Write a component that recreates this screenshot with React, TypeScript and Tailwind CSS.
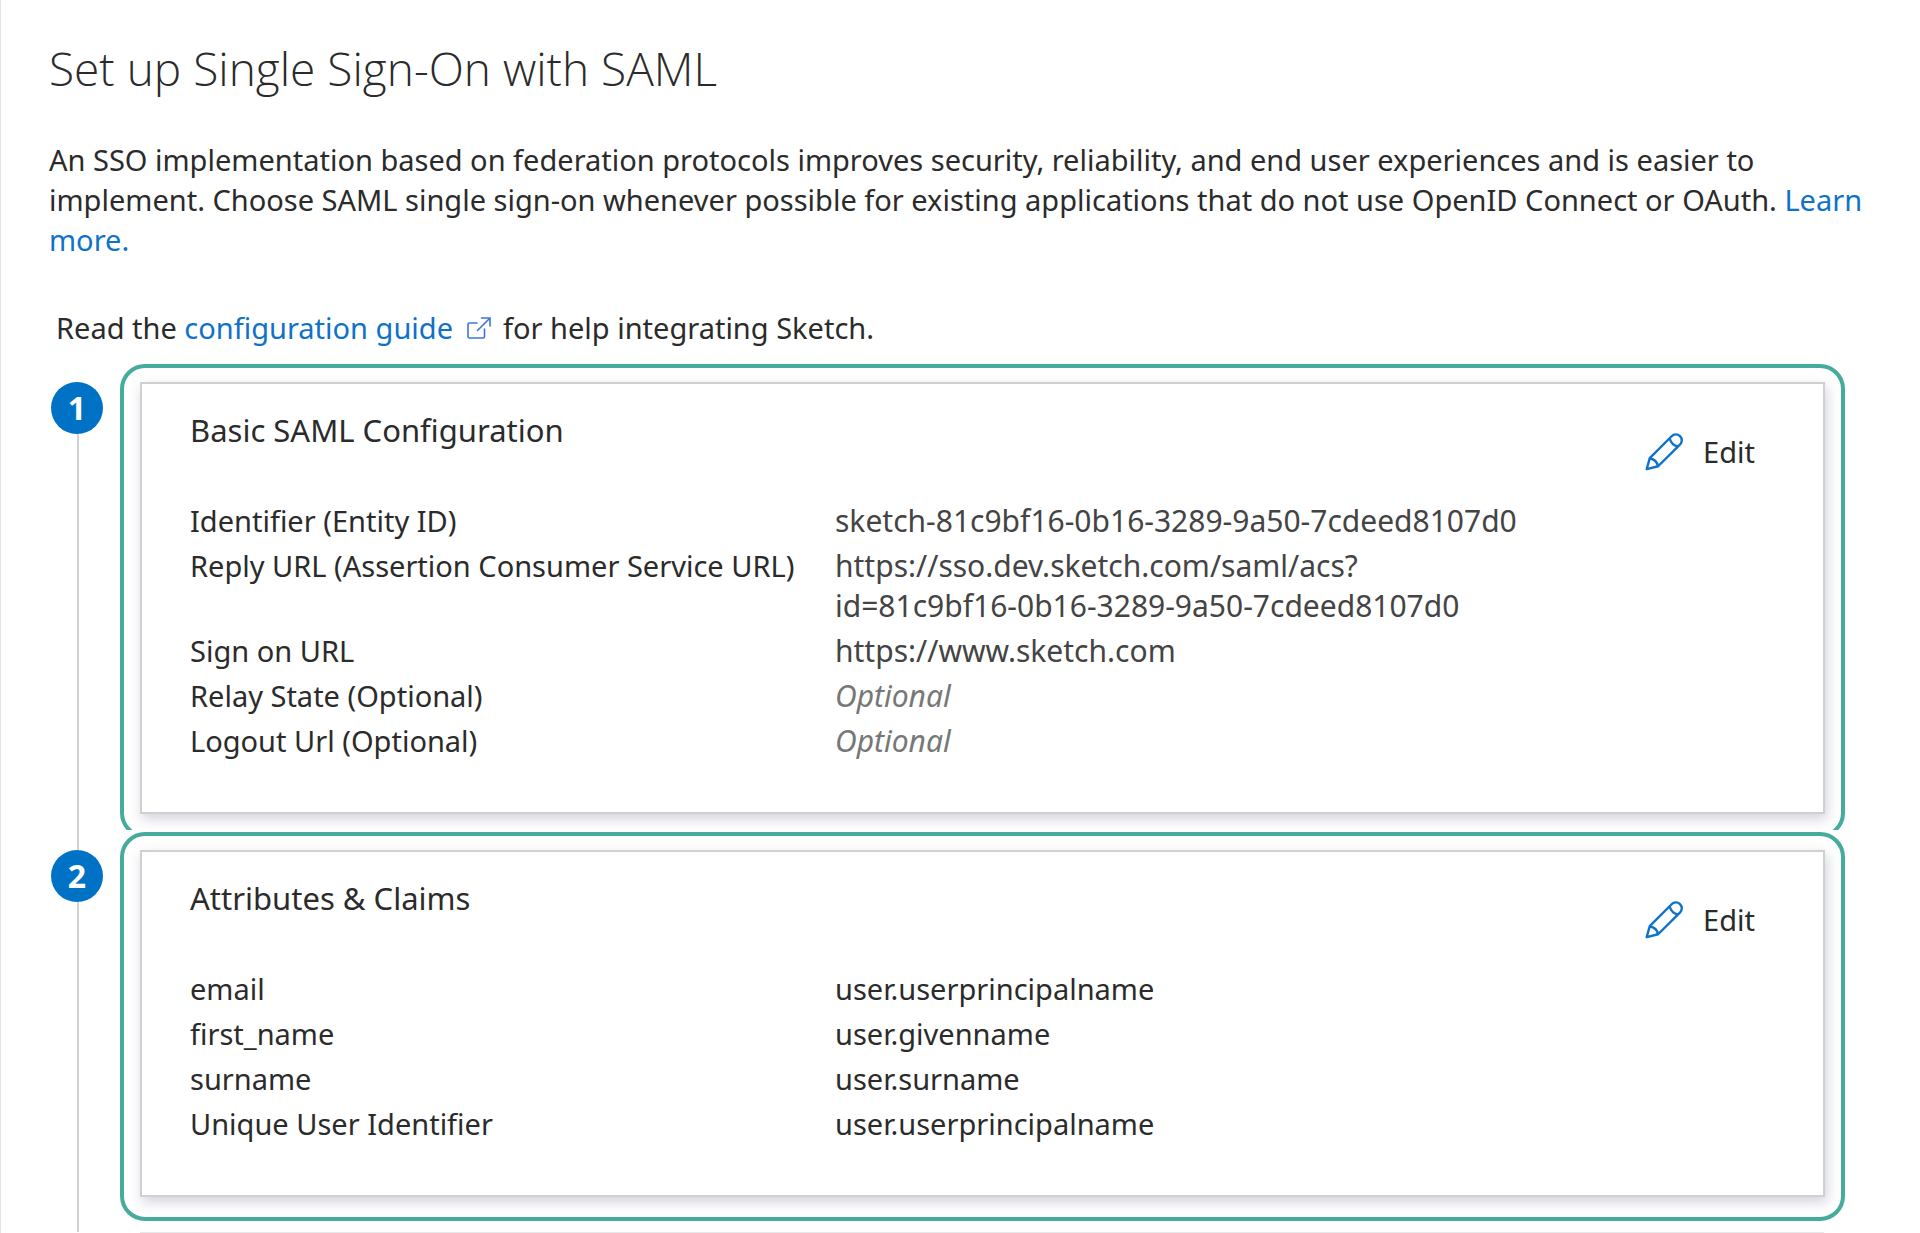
import React from 'react';

interface Field {
  label: string;
  value: string;
  kind?: 'link' | 'optional';
}

interface StepProps {
  step: number;
  title: string;
  fields: Field[];
  first?: boolean;
}

const PencilIcon = () => (
  <svg
    className="size-[38px] shrink-0"
    viewBox="0 0 40 40"
    fill="none"
    stroke="#0f72c9"
    strokeWidth="2.5"
    strokeLinejoin="round"
    aria-hidden="true"
  >
    <path d="M1.8 38 L5 26.5 L28 3.4 A6 6 0 0 1 37 12 L13.8 35 Z" />
    <path d="M26 5.8 Q27.8 12.6 34.6 14.2" />
    <path d="M5.2 26.8 Q12.4 28 13.6 34.8" />
  </svg>
);

const ExternalIcon = () => (
  <svg
    className="mr-3 ml-[14px] inline-block h-[22px] w-6 align-baseline"
    viewBox="0 0 24 22"
    fill="none"
    stroke="#3f74dc"
    strokeWidth="1.6"
    strokeLinecap="round"
    aria-hidden="true"
  >
    <path d="M10 6 H2.5 Q1 6 1 7.5 V19.5 Q1 21 2.5 21 H16 Q17.5 21 17.5 19.5 V12" />
    <path d="M10.5 13.5 L23 1 M14.5 1 H23 V9" />
  </svg>
);

const Step = ({ step, title, fields, first }: StepProps) => {
  const values = {
    link: 'text-[30px] text-[#444]',
    optional: 'text-[30px] text-[#777] italic',
  };

  return (
    <li className="flex pr-[75px] pl-[51px]">
      <div className="flex w-[69px] shrink-0 flex-col items-start">
        <div
          className={`ml-[26px] h-[18px] w-[2px] ${first ? '' : 'bg-[#d2d2d2]'}`}
        ></div>
        <span className="flex size-[52px] shrink-0 items-center justify-center rounded-full bg-[#0072c6] text-[32px] font-bold text-white">
          {step}
        </span>
        <div className="ml-[26px] w-[2px] grow bg-[#d2d2d2]"></div>
      </div>
      <div
        className={`min-w-0 grow ${first ? 'mb-[2px] overflow-hidden' : 'mb-[11px]'}`}
      >
        <div
          className={`rounded-[25px] border-4 border-[#45ac9b] px-4 pt-[14px] pb-5 ${first ? '-mb-2' : ''}`}
        >
          <section className="border-2 border-[#cfd0d2] bg-white px-12 pt-[26px] pb-[46px] shadow-[2px_5px_12px_0px_rgba(70,80,110,0.25)]">
            <div className="mb-[29px] flex items-start justify-between">
              <h2 className="text-[31px] leading-10">{title}</h2>
              <button
                type="button"
                className="mt-[22px] mr-5 flex items-center gap-5 text-[29px] leading-10"
              >
                <PencilIcon />
                Edit
              </button>
            </div>
            <dl>
              {fields.map(({ label, value, kind }) => (
                <div
                  key={label}
                  className="grid grid-cols-[645px_1fr] pb-[5px] text-[29px] leading-10"
                >
                  <dt>{label}</dt>
                  <dd
                    className={`leading-10 whitespace-pre-line ${kind ? values[kind] : ''}`}
                  >
                    {value}
                  </dd>
                </div>
              ))}
            </dl>
          </section>
        </div>
      </div>
    </li>
  );
};

const samlFields: Field[] = [
  {
    label: 'Identifier (Entity ID)',
    value: 'sketch-81c9bf16-0b16-3289-9a50-7cdeed8107d0',
    kind: 'link',
  },
  {
    label: 'Reply URL (Assertion Consumer Service URL)',
    value:
      'https://sso.dev.sketch.com/saml/acs?\nid=81c9bf16-0b16-3289-9a50-7cdeed8107d0',
    kind: 'link',
  },
  { label: 'Sign on URL', value: 'https://www.sketch.com', kind: 'link' },
  { label: 'Relay State (Optional)', value: 'Optional', kind: 'optional' },
  { label: 'Logout Url (Optional)', value: 'Optional', kind: 'optional' },
];

const claimFields: Field[] = [
  { label: 'email', value: 'user.userprincipalname' },
  { label: 'first_name', value: 'user.givenname' },
  { label: 'surname', value: 'user.surname' },
  { label: 'Unique User Identifier', value: 'user.userprincipalname' },
];

export default function App() {
  return (
    <main className="min-h-screen bg-white font-['Noto_Sans',sans-serif] text-[#2b2b2b] shadow-[inset_1px_0_#e4e4e4]">
      <h1 className="px-[49px] pt-[38px] pb-[2px] font-['Open_Sans',sans-serif] text-[46px] leading-[60px] font-light">
        Set up Single Sign-On with SAML
      </h1>
      <p className="px-[49px] pt-10 text-[29px] leading-10">
        An SSO implementation based on federation protocols improves security,
        reliability, and end user experiences and is easier to implement. Choose
        SAML single sign-on whenever possible for existing applications that do
        not use OpenID Connect or OAuth.{' '}
        <a href="#learn-more" className="text-[#0f72c9]">
          Learn more.
        </a>
      </p>
      <p className="px-14 pt-12 pb-4 text-[29px] leading-10">
        Read the{' '}
        <a href="#guide" className="text-[#0f72c9]">
          configuration guide
          <ExternalIcon />
        </a>
        for help integrating Sketch.
      </p>
      <ol>
        <Step step={1} title="Basic SAML Configuration" fields={samlFields} first />
        <Step step={2} title="Attributes & Claims" fields={claimFields} />
      </ol>
      <div className="mr-24 ml-[140px] border-t border-[#e6e8e9]"></div>
    </main>
  );
}
